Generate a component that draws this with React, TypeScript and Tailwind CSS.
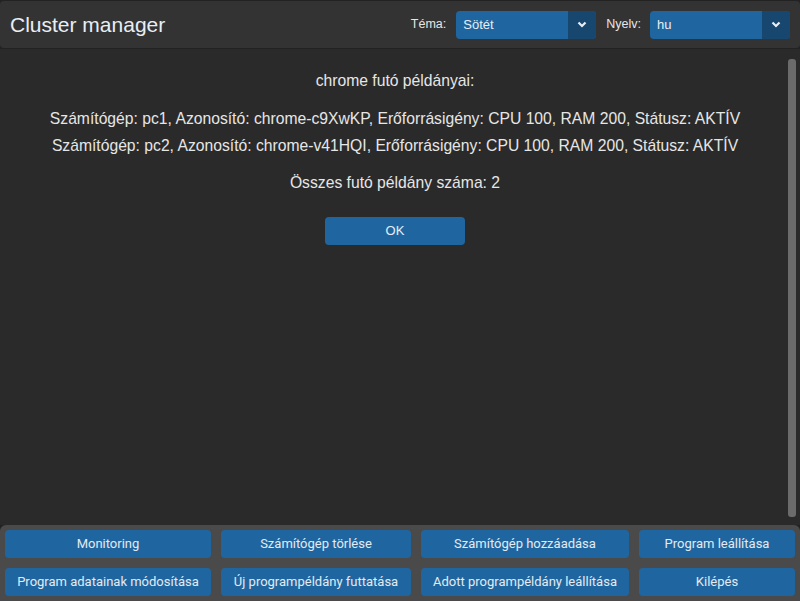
import {FunctionComponent} from "react";

type SelectParams = {
    value: string
}

const Select: FunctionComponent<SelectParams> = ({value}) => {
    return (
        <div className="flex h-[28px] w-[140px] overflow-hidden rounded-[4px] bg-[#1f66a1]">
            <div className="flex-1 pl-[7px] text-[13px] leading-[28px] text-[#e8eef5]">{value}</div>
            <div className="flex w-[28px] items-center justify-center bg-[#17466f]">
                <svg width="10" height="7" viewBox="0 0 10 7">
                    <path d="M1.5 1.5 L5 5 L8.5 1.5" fill="none" stroke="#e8eef5" strokeWidth="2.2" />
                </svg>
            </div>
        </div>
    );
}

const actions = [
    "Monitoring",
    "Számítógép törlése",
    "Számítógép hozzáadása",
    "Program leállítása",
    "Program adatainak módosítása",
    "Új programpéldány futtatása",
    "Adott programpéldány leállítása",
    "Kilépés",
];

const instances = [
    {host: "pc1", id: "chrome-c9XwKP"},
    {host: "pc2", id: "chrome-v41HQI"},
];

const App: FunctionComponent = () => {
    return (
        <div className="flex h-[601px] w-[800px] flex-col overflow-hidden bg-[#222222] font-['Liberation_Sans',Arial,sans-serif] text-[#e6e6e6]">
            {/* header */}
            <div className="mt-px flex h-[47px] shrink-0 items-center rounded-[4px] bg-[#333333] pl-[10px] pr-[10px]">
                <h1 className="flex-1 text-[21px] leading-none text-[#e8eef5]">Cluster manager</h1>
                <span className="mr-[10px] text-[12.5px]">Téma:</span>
                <Select value="Sötét"/>
                <span className="ml-[10px] mr-[9px] text-[12.5px]">Nyelv:</span>
                <Select value="hu"/>
            </div>

            {/* content */}
            <div className="mt-px flex min-h-0 flex-1 bg-[#2a2a2a]">
                <div className="flex flex-1 flex-col items-center pl-[4px] pt-[20px] text-[15.7px] leading-[24px]">
                    <p>chrome futó példányai:</p>
                    <div className="mt-[14px] flex flex-col gap-[3px]">
                        {instances.map((it) => (
                            <p key={it.id} className="text-center">
                                Számítógép: {it.host}, Azonosító: {it.id}, Erőforrásigény: CPU 100, RAM 200, Státusz: AKTÍV
                            </p>
                        ))}
                    </div>
                    <p className="mt-[13px]">Összes futó példány száma: 2</p>
                    <button className="mt-[22px] h-[28px] w-[140px] rounded-[4px] bg-[#1f66a1] text-[13px] text-[#e8eef5]">
                        OK
                    </button>
                </div>
                <div className="flex w-[14px] justify-start pb-[8px] pl-[2px] pt-[10px]">
                    <div className="w-[8px] rounded-[3px] bg-[#6b6b6b]"></div>
                </div>
            </div>

            {/* actions */}
            <div className="grid h-[76px] shrink-0 grid-cols-[206px_190px_208px_156px] gap-x-[10px] gap-y-[10px] rounded-t-[6px] bg-[#4a4a4a] p-[5px] font-['Roboto',sans-serif]">
                {actions.map((a) => (
                    <button
                        key={a}
                        className="h-[28px] rounded-[4px] bg-[#1f66a1] text-[13px] text-[#e3eaf2]"
                    >
                        {a}
                    </button>
                ))}
            </div>
        </div>
    );
}

export default App;
